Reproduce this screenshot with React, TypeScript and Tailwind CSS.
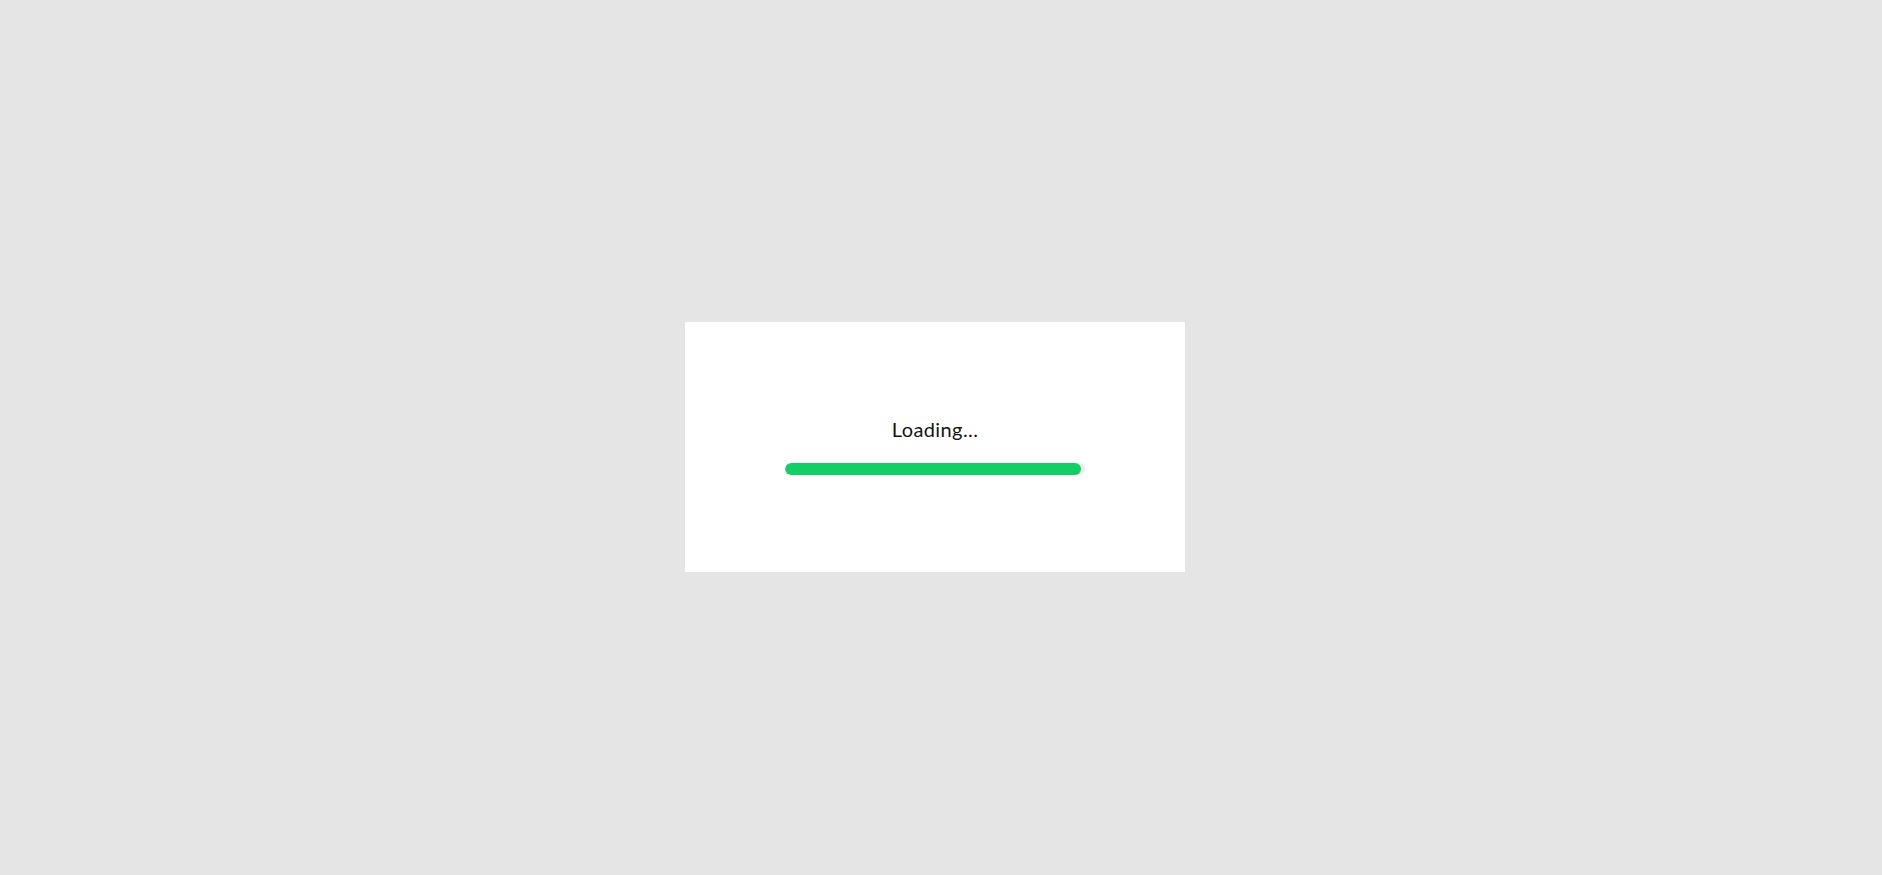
export default function App() {
  const progress = 98.5

  return (
    <div className="min-h-screen w-full bg-[#e5e5e5] flex items-center justify-center pr-[12px] pt-[19px]">
      <div className="w-[500px] h-[250px] bg-white flex flex-col items-center justify-center pb-[4px]">
        <p className="text-[20px] leading-[28px] tracking-[0.4px] text-[#151515] font-['Lato',sans-serif] mb-[20px]">
          Loading...
        </p>
        <div className="w-[300px] h-[12px] rounded-full bg-[#ececec] overflow-hidden">
          <div className="h-full rounded-full bg-[#13ce66]" style={{ width: `${progress}%` }} />
        </div>
      </div>
    </div>
  )
}
